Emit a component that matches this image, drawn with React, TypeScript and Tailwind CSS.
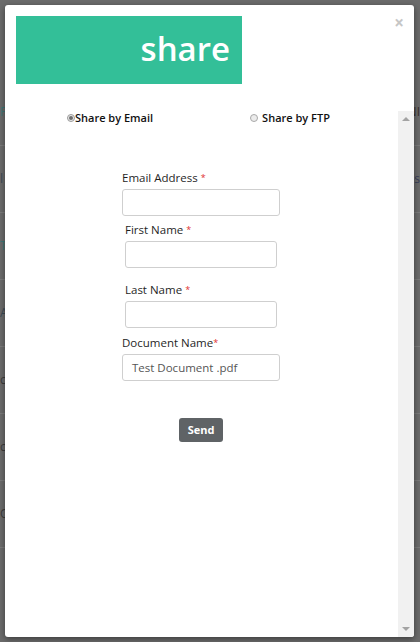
import React from "react";

const rows = [
  { l: "F", lc: "text-[#3f7777]", r: "NI", rc: "text-[#3a2f2a]" },
  { l: "l", lc: "text-[#3c4a55]", r: "-s", rc: "text-[#3a3f5a]" },
  { l: "T", lc: "text-[#3f7777]", r: "", rc: "" },
  { l: "A", lc: "text-[#3c4a55]", r: "", rc: "" },
  { l: "c", lc: "text-[#3c3c3c]", r: "", rc: "" },
  { l: "c", lc: "text-[#3c3c3c]", r: "", rc: "" },
  { l: "O", lc: "text-[#3c3c3c]", r: "", rc: "" },
];

function Label({ text, tight }: { text: string; tight?: boolean }) {
  return (
    <div className="text-[11.5px] leading-[14px] text-[#1f1f1f] font-medium">
      {text}
      <span className={`text-[#e0302f] text-[9px] align-top ${tight ? "" : "ml-[3px]"}`}>*</span>
    </div>
  );
}

export default function App() {
  return (
    <div
      className="relative w-[420px] h-[642px] overflow-hidden bg-[#6b6b6b]"
      style={{ fontFamily: '"Open Sans", "Liberation Sans", sans-serif' }}
    >
      {/* background page under the overlay */}
      <div className="pt-[79px]">
        {rows.map((r, i) => (
          <div
            key={i}
            className="h-[67px] border-b border-[#7b7b7b] flex items-center justify-between text-[12px]"
          >
            <span className={r.lc}>{r.l}</span>
            <span className={r.rc}>{r.r}</span>
          </div>
        ))}
      </div>

      {/* modal */}
      <div className="absolute left-[5px] top-[5px] w-[409px] h-[632px] bg-white rounded-[3px] shadow-[0_2px_6px_rgba(0,0,0,0.45)] flex flex-col overflow-hidden">
        <span className="absolute right-[10px] top-[9px] text-[17px] leading-[17px] font-bold text-[#c6c6c6]">
          ×
        </span>

        <div className="pt-[11px] pl-[11px] h-[106px] shrink-0">
          <div className="w-[226px] h-[68px] bg-[#33bf98] flex items-center justify-end pr-[12px]">
            <span className="text-white text-[33px] leading-none -mt-[3px] font-semibold">
              share
            </span>
          </div>
        </div>

        <div className="flex flex-1 min-h-0">
          <div className="flex-1 flex flex-col">
            <div className="h-[14px] flex items-center text-[11px] font-semibold text-[#111]">
              <div className="ml-[62px] flex items-center">
                <span className="w-[8px] h-[8px] rounded-full border border-[#9a9a9a] bg-[#e9e9e9] flex items-center justify-center">
                  <span className="w-[4px] h-[4px] rounded-full bg-[#6e6e6e]" />
                </span>
                <span>Share by Email</span>
              </div>
              <div className="ml-[97px] flex items-center">
                <span className="w-[8px] h-[8px] rounded-full border border-[#a8a8a8] bg-[#ececec]" />
                <span className="ml-[4px]">Share by FTP</span>
              </div>
            </div>

            <div className="w-[158px] ml-[117px] mt-[46px] flex flex-col">
              <Label text="Email Address" />
              <div className="mt-[4px] h-[27px] border border-[#cfcfcf] rounded-[3px]" />

              <div className="w-[152px] mx-auto mt-[7px]">
                <Label text="First Name" />
                <div className="mt-[4px] h-[27px] border border-[#cfcfcf] rounded-[3px]" />
              </div>

              <div className="w-[152px] mx-auto mt-[15px]">
                <Label text="Last Name" />
                <div className="mt-[4px] h-[27px] border border-[#cfcfcf] rounded-[3px]" />
              </div>

              <div className="mt-[8px]">
                <Label text="Document Name" tight />
                <div className="mt-[4px] h-[27px] border border-[#cfcfcf] rounded-[3px] flex items-center pl-[9px] text-[11.5px] text-[#555]">
                  Test Document .pdf
                </div>
              </div>

              <div className="mt-[37px] flex justify-center">
                <button className="w-[44px] h-[24px] rounded-[3px] bg-[#5f6366] text-white text-[11px] font-bold">
                  Send
                </button>
              </div>
            </div>
          </div>

          <div className="w-[16px] bg-[#f1f1f1] flex flex-col items-center justify-between py-[6px]">
            <svg width="8" height="4" viewBox="0 0 8 4">
              <polygon points="0,4 8,4 4,0" fill="#a3a3a3" />
            </svg>
            <svg width="8" height="4" viewBox="0 0 8 4">
              <polygon points="0,0 8,0 4,4" fill="#a3a3a3" />
            </svg>
          </div>
        </div>
      </div>
    </div>
  );
}
